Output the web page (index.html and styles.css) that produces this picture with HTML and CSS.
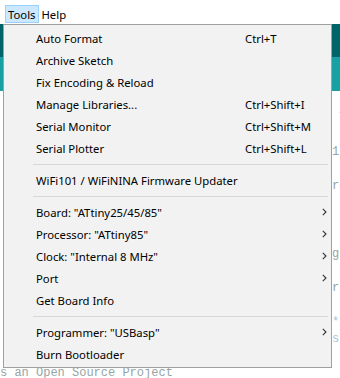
FILE: index.html
```html
<!DOCTYPE html>
<html lang="en">
<head>
<meta charset="UTF-8">
<meta name="viewport" content="width=device-width, initial-scale=1.0">
<title>Tools menu</title>
<link rel="stylesheet" href="styles.css">
</head>
<body>

<div class="menubar">
    <span class="menubar-item active">Tools</span>
    <span class="menubar-item">Help</span>
</div>

<div class="editor">
    <div class="toolbar"></div>
    <div class="tabs"></div>
    <!-- only the right edge of the sketch shows past the open menu -->
    <div class="code">
        <div class="line"></div>
        <div class="line"> T</div>
        <div class="line"></div>
        <div class="line">1</div>
        <div class="line"></div>
        <div class="line">re</div>
        <div class="line"></div>
        <div class="line"></div>
        <div class="line"></div>
        <div class="line">g</div>
        <div class="line"></div>
        <div class="line">re</div>
        <div class="line"></div>
        <div class="line"><span class="kw">*</span>:</div>
        <div class="line"><span class="kw">s</span>:</div>
        <div class="line"></div>
        <div class="line full">s an Open Source Project</div>
    </div>
</div>

<div class="menu">
    <div class="item"><span class="label">Auto Format</span><span class="key">Ctrl+T</span></div>
    <div class="item"><span class="label">Archive Sketch</span></div>
    <div class="item"><span class="label">Fix Encoding &amp; Reload</span></div>
    <div class="item"><span class="label">Manage Libraries...</span><span class="key">Ctrl+Shift+I</span></div>
    <div class="item"><span class="label">Serial Monitor</span><span class="key">Ctrl+Shift+M</span></div>
    <div class="item"><span class="label">Serial Plotter</span><span class="key">Ctrl+Shift+L</span></div>
    <div class="separator"></div>
    <div class="item"><span class="label">WiFi101 / WiFiNINA Firmware Updater</span></div>
    <div class="separator"></div>
    <div class="item"><span class="label">Board: "ATtiny25/45/85"</span><span class="key"></span><span class="arrow"><svg width="5" height="8" viewBox="0 0 5 8"><polyline points="0.8,0.8 4,4 0.8,7.2"/></svg></span></div>
    <div class="item"><span class="label">Processor: "ATtiny85"</span><span class="key"></span><span class="arrow"><svg width="5" height="8" viewBox="0 0 5 8"><polyline points="0.8,0.8 4,4 0.8,7.2"/></svg></span></div>
    <div class="item"><span class="label">Clock: "Internal 8 MHz"</span><span class="key"></span><span class="arrow"><svg width="5" height="8" viewBox="0 0 5 8"><polyline points="0.8,0.8 4,4 0.8,7.2"/></svg></span></div>
    <div class="item"><span class="label">Port</span><span class="key"></span><span class="arrow"><svg width="5" height="8" viewBox="0 0 5 8"><polyline points="0.8,0.8 4,4 0.8,7.2"/></svg></span></div>
    <div class="item"><span class="label">Get Board Info</span></div>
    <div class="separator"></div>
    <div class="item"><span class="label">Programmer: "USBasp"</span><span class="key"></span><span class="arrow"><svg width="5" height="8" viewBox="0 0 5 8"><polyline points="0.8,0.8 4,4 0.8,7.2"/></svg></span></div>
    <div class="item"><span class="label">Burn Bootloader</span></div>
</div>

</body>
</html>
```

FILE: styles.css
```css
body {
    margin: 0;
    background-color: #fff;
    font-family: "Noto Sans", "Open Sans", sans-serif;
    font-size: 11.3px;
    color: #000;
    overflow: hidden;
}
.menubar {
    height: 24px;
    padding: 5px 0 0 5px;
    box-sizing: border-box;
    display: flex;
}
.menubar-item {
    height: 18px;
    line-height: 17px;
    padding: 0 2px;
    border: 1px solid transparent;
    box-sizing: border-box;
}
.menubar-item.active {
    background-color: #cce8ff;
    border-color: #99d1ff;
}
.toolbar {
    height: 33px;
    background-color: #006468;
}
.tabs {
    height: 34px;
    background-color: #17a1a5;
}
.code {
    padding-top: 2px;
    font-family: "Liberation Mono", monospace;
    font-size: 12px;
    color: #95a5a6;
}
.line {
    height: 17px;
    line-height: 17px;
    padding-left: 332px;
    white-space: pre;
}
.line.full {
    padding-left: 0;
}
.kw {
    color: #a9c4d8;
}
.menu {
    position: absolute;
    top: 24px;
    left: 3px;
    width: 329px;
    box-sizing: border-box;
    padding: 2px 0;
    background-color: #f2f2f2;
    border: 1px solid #a0a0a0;
}
.item {
    display: flex;
    align-items: center;
    height: 22px;
    padding-left: 32px;
}
.label {
    width: 209px;
    white-space: nowrap;
}
.key {
    flex: 1;
}
.arrow {
    width: 14px;
    display: flex;
    justify-content: center;
}
.arrow svg polyline {
    fill: none;
    stroke: #333;
    stroke-width: 1.1;
}
.separator {
    height: 1px;
    margin: 5px 3px 4px 29px;
    background-color: #d7d7d7;
}
```
